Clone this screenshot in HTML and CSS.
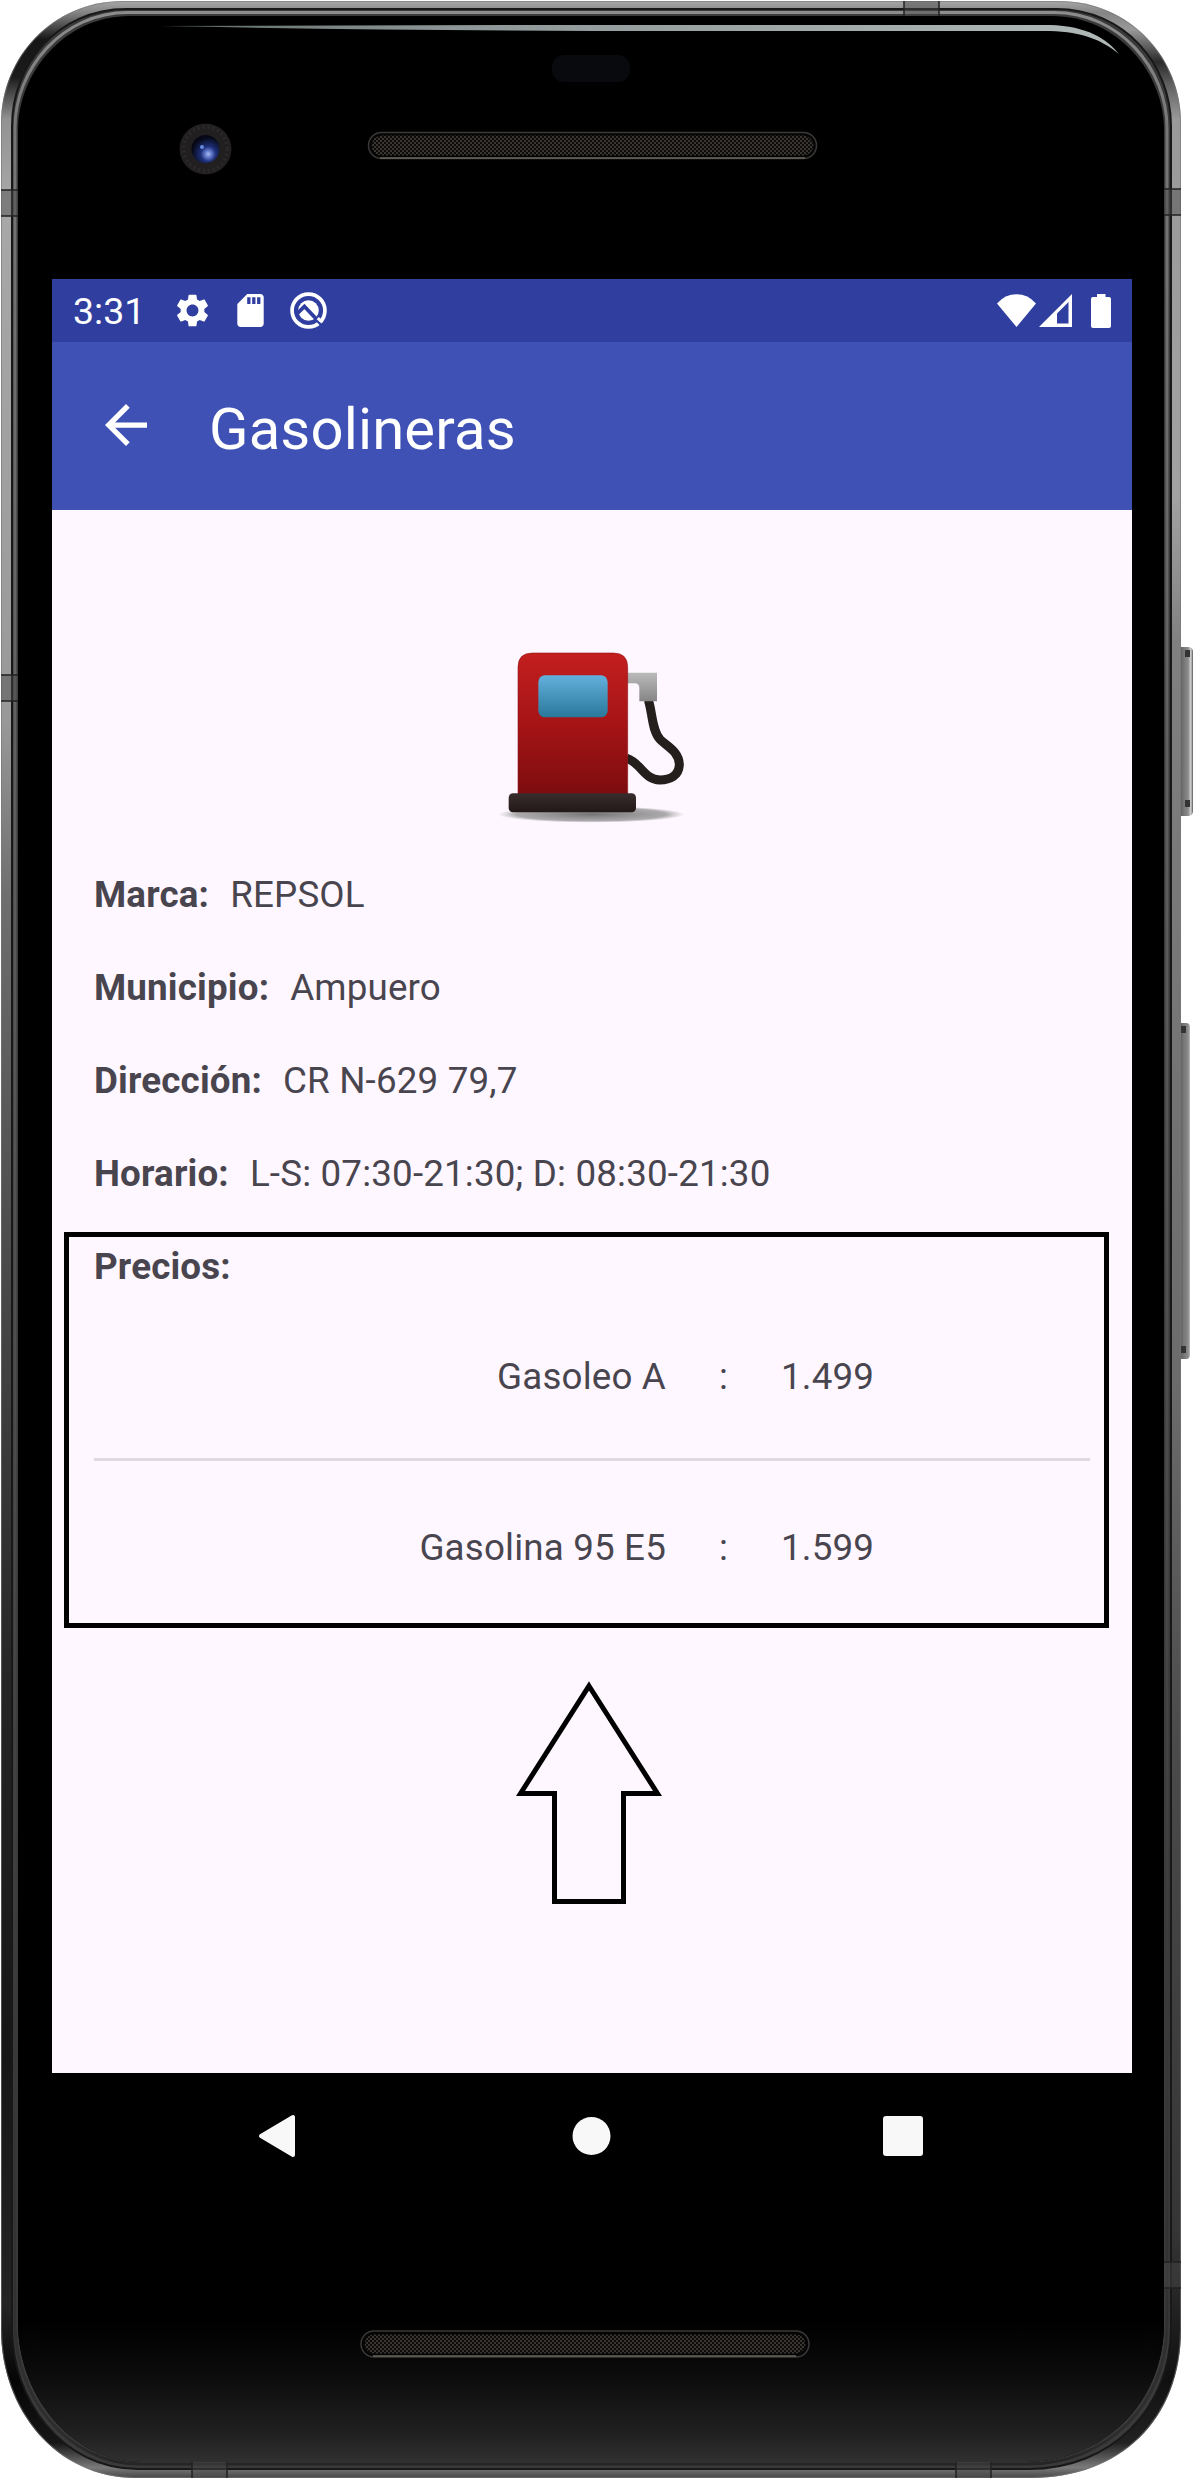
FILE: index.html
```html
<!DOCTYPE html>
<html lang="es">
<head>
<meta charset="utf-8">
<title>Gasolineras</title>
<link rel="stylesheet" href="styles.css">
</head>
<body>
<div class="phone">
  <svg class="chassis" viewBox="0 0 1194 2480" aria-hidden="true">
    <defs>
      <clipPath id="body"><path d="M123 1H1059C1130 1 1181 58 1181 123V2329C1181 2420 1120 2478 1031 2478H136C56 2478 1 2410 1 2329V123C1 58 52 1 123 1Z"/></clipPath>
      <linearGradient id="left" gradientUnits="userSpaceOnUse" x1="0" y1="0" x2="0" y2="2480">
        <stop offset="0" stop-color="#aaa"/><stop offset=".005" stop-color="#858585"/><stop offset=".016" stop-color="#161616"/><stop offset=".031" stop-color="#1b1b1b"/><stop offset=".048" stop-color="#929292"/><stop offset=".08" stop-color="#a8a8a8"/><stop offset=".29" stop-color="#999"/><stop offset=".36" stop-color="#6f6f6f"/><stop offset=".52" stop-color="#484848"/><stop offset=".68" stop-color="#252525"/><stop offset=".83" stop-color="#161616"/><stop offset=".93" stop-color="#242424"/><stop offset=".96" stop-color="#050505"/><stop offset=".985" stop-color="#161616"/><stop offset=".995" stop-color="#7a7a7a"/><stop offset="1" stop-color="#3c3c3c"/>
      </linearGradient>
      <linearGradient id="right" gradientUnits="userSpaceOnUse" x1="0" y1="0" x2="0" y2="2480">
        <stop offset="0" stop-color="#aaa"/><stop offset=".005" stop-color="#858585"/><stop offset=".012" stop-color="#999"/><stop offset=".025" stop-color="#2a2a2a"/><stop offset=".034" stop-color="#606060"/><stop offset=".048" stop-color="#999"/><stop offset=".2" stop-color="#a2a2a2"/><stop offset=".26" stop-color="#808080"/><stop offset=".56" stop-color="#6b6b6b"/><stop offset=".7" stop-color="#4b4b4b"/><stop offset=".9" stop-color="#353535"/><stop offset=".96" stop-color="#101010"/><stop offset=".985" stop-color="#222"/><stop offset=".995" stop-color="#7a7a7a"/><stop offset="1" stop-color="#3c3c3c"/>
      </linearGradient>
      <linearGradient id="edge" gradientUnits="userSpaceOnUse" x1="0" y1="0" x2="0" y2="2480">
        <stop offset="0" stop-color="#8f8f8f"/><stop offset=".05" stop-color="#777"/><stop offset=".3" stop-color="#606060"/><stop offset=".6" stop-color="#4a4a4a"/><stop offset=".98" stop-color="#2d2d2d"/><stop offset="1" stop-color="#222"/>
      </linearGradient>
      <linearGradient id="chin" x1="0" y1="0" x2="0" y2="1">
        <stop offset="0" stop-color="#000"/><stop offset=".35" stop-color="#0a0a0a"/><stop offset=".8" stop-color="#202020"/><stop offset="1" stop-color="#303030"/>
      </linearGradient>
      <linearGradient id="glow"><stop offset="0" stop-color="#1e1e1e" stop-opacity="0"/><stop offset=".5" stop-color="#1e1e1e"/><stop offset="1" stop-color="#1e1e1e" stop-opacity="0"/></linearGradient>
      <linearGradient id="shine"><stop offset="0" stop-color="#5d6b68"/><stop offset=".3" stop-color="#8d9696"/><stop offset="1" stop-color="#b0b8b8"/></linearGradient>
      <linearGradient id="key"><stop offset="0" stop-color="#555"/><stop offset=".35" stop-color="#777"/><stop offset=".65" stop-color="#8a8a8a"/><stop offset=".85" stop-color="#d2d5d2"/><stop offset="1" stop-color="#555"/></linearGradient>
      <radialGradient id="lens" cx=".6" cy=".68" r=".6"><stop offset="0" stop-color="#a9bbf2"/><stop offset=".2" stop-color="#6379cb"/><stop offset=".45" stop-color="#1d2f78"/><stop offset="1" stop-color="#060815"/></radialGradient>
      <pattern id="mesh" width="4" height="4" patternUnits="userSpaceOnUse"><rect width="4" height="4" fill="#0c0b0a"/><path d="M0 0h2v2h-2zM2 2h2v2h-2z" fill="#393531"/></pattern>
    </defs>
    <path d="M1179 647h9q5 0 5 5v159q0 5-5 5h-9zM1179 1023h7q4 0 4 4v328q0 4-4 4h-7z" fill="url(#key)"/>
    <path d="M1185 650h5v7h-5zM1185 800h5v7h-5zM1181 1026h5v7h-5zM1181 1346h5v7h-5z" fill="#333"/>
    <g clip-path="url(#body)">
      <path d="M0 0h594v2480H0z" fill="url(#left)"/>
      <path d="M594 0h600v2480H594z" fill="url(#right)"/>
      <path d="M123 1H1059C1130 1 1181 58 1181 123V2329C1181 2420 1120 2478 1031 2478H136C56 2478 1 2410 1 2329V123C1 58 52 1 123 1Z" fill="none" stroke="#777" stroke-opacity=".6" stroke-width="2"/>
      <path d="M126 9H1056C1125 9 1171 65 1171 126V2327C1171 2410 1110 2469 1029 2469H138C62 2469 12 2400 12 2327V126C12 65 58 9 126 9Z" fill="#3a3a3a" stroke="#181818" stroke-width="2"/>
      <path d="M128 12.500H1054C1120 12.500 1167 69 1167 128V2325C1167 2405 1106 2464 1027 2464H140C66 2464 15 2395 15 2325V128C15 69 62 12.500 128 12.500Z" fill="none" stroke="url(#edge)" stroke-width="3"/>
      <g fill="#4a4a4a" fill-opacity=".45" stroke="#222" stroke-width="1.500">
        <path d="M904-2h35v20h-35zM-2 190h22v26H-2zM-2 675h22v26H-2zM1163 189h20v26h-20zM1163 2262h20v26h-20zM192 2460h35v22h-35zM956 2460h35v22h-35z"/>
      </g>
    </g>
    <path d="M130 16H1052C1118 16 1164 73 1164 130V2323C1164 2403 1103 2462 1025 2462H142C69 2462 18 2393 18 2323V130C18 73 64 16 130 16Z" fill="#000"/>
    <path d="M18 2320H1164V2323C1164 2403 1103 2462 1025 2462H142C69 2462 18 2393 18 2323Z" fill="url(#chin)"/>
    <path d="M22 110h17v2250H22zM1145 70h16v2280h-16z" fill="url(#glow)"/>
    <path d="M159 26L520 25H1050C1087 26 1107 39 1119 54C1102 40 1083 32 1050 31H594Q370 30 159 26Z" fill="url(#shine)"/>
    <rect x="552" y="55" width="78" height="27" rx="12" fill="#080a0e"/>
    <ellipse cx="205.500" cy="149" rx="26" ry="25.500" fill="#211f20"/>
    <circle cx="205.500" cy="149" r="22" fill="none" stroke="#2c292a" stroke-width="4" stroke-dasharray="2 3"/>
    <circle cx="205.500" cy="149" r="14" fill="url(#lens)"/>
    <circle cx="202" cy="147" r="2" fill="#6688dd"/>
    <g fill="url(#mesh)" stroke="#050505" stroke-width="3">
      <rect x="370" y="134" width="445" height="23" rx="11.500"/>
      <rect x="363" y="2333" width="444" height="22" rx="11"/>
    </g>
    <g fill="none" stroke="#3b3937" stroke-width="1.500">
      <rect x="368.500" y="132.500" width="448" height="26" rx="13"/>
      <rect x="361" y="2331" width="448" height="26" rx="13"/>
    </g>
    <path d="M380 158H805M373 2356H796" stroke="#6a655e" stroke-width="1.500"/>
  </svg>

  <main class="screen">
    <div class="status">
      <span class="time">3:31</span>
      <svg class="gear" viewBox="2 2 20 20"><path fill="#fff" d="M19.140 12.940c.040-.300.060-.610.060-.940 0-.320-.020-.640-.070-.940l2.030-1.580c.180-.140.230-.410.120-.610l-1.920-3.320c-.120-.220-.370-.290-.590-.220l-2.390.960c-.500-.380-1.030-.700-1.620-.940l-.360-2.540c-.040-.240-.240-.410-.480-.410h-3.840c-.240 0-.430.170-.470.410l-.360 2.540c-.590.240-1.130.570-1.620.940l-2.390-.960c-.220-.080-.470 0-.590.220L2.740 8.870c-.120.210-.080.470.120.610l2.030 1.580c-.050.300-.090.630-.090.940s.020.640.070.940l-2.030 1.580c-.180.140-.230.410-.120.610l1.920 3.320c.120.220.370.290.590.220l2.390-.960c.500.380 1.030.700 1.620.940l.360 2.540c.050.240.240.410.480.410h3.840c.240 0 .440-.170.470-.410l.360-2.540c.590-.240 1.130-.560 1.620-.940l2.390.960c.220.080.470 0 .590-.220l1.920-3.320c.120-.220.070-.470-.120-.610l-2.010-1.580zM12 15.600c-1.980 0-3.600-1.620-3.600-3.600s1.620-3.600 3.600-3.600 3.600 1.620 3.600 3.600-1.620 3.600-3.600 3.600z"/></svg>
      <svg class="card" viewBox="4 2 16 20"><path fill="#fff" d="M18 2h-8L4.020 8 4 20c0 1.100.900 2 2 2h12c1.100 0 2-.900 2-2V4c0-1.100-.900-2-2-2zm-6 6h-2V4h2v4zm3 0h-2V4h2v4zm3 0h-2V4h2v4z"/></svg>
      <svg class="badge" viewBox="0 0 36 36"><circle cx="18" cy="18" r="16" fill="none" stroke="#fff" stroke-width="3.600"/><circle cx="18" cy="18" r="10" fill="#fff"/><path d="M7 21L14 14L33 34" fill="none" stroke="#303f9f" stroke-width="3.600"/><path d="M27 25.500l4.500 4" stroke="#fff" stroke-width="3"/></svg>
      <span class="spacer"></span>
      <svg class="wifi" viewBox="0 0 39 33"><path fill="#fff" d="M0 9.500Q8 .3 19.500.3T39 9.500L19.500 33Z"/></svg>
      <svg class="signal" viewBox="0 0 33 33"><path fill="#fff" fill-rule="evenodd" d="M33 0V33H0ZM29.500 8L18 19.500V29.500H29.500Z"/></svg>
      <svg class="battery" viewBox="0 0 20 34"><path fill="#fff" d="M6 0h8.500v3H18q2 0 2 2v27q0 2-2 2H2q-2 0-2-2V5q0-2 2-2h4z"/></svg>
    </div>
    <header class="appbar">
      <svg class="back" viewBox="4 4 16 16"><path fill="#fff" d="M20 11H7.830l5.590-5.590L12 4l-8 8 8 8 1.410-1.410L7.830 13H20v-2z"/></svg>
      <h1>Gasolineras</h1>
    </header>
    <section class="content">
      <svg class="pump" viewBox="0 0 690 630">
        <defs>
          <linearGradient id="red" x1="0" y1="0" x2="0" y2="1"><stop offset="0" stop-color="#c31f1f"/><stop offset=".5" stop-color="#a51416"/><stop offset="1" stop-color="#7b0c0e"/></linearGradient>
          <linearGradient id="blue" x1="0" y1="0" x2="0" y2="1"><stop offset="0" stop-color="#63b0dd"/><stop offset="1" stop-color="#29789b"/></linearGradient>
          <linearGradient id="grey" x1="0" y1="0" x2="0" y2="1"><stop offset="0" stop-color="#bbb"/><stop offset="1" stop-color="#858585"/></linearGradient>
          <linearGradient id="base" x1="0" y1="0" x2="0" y2="1"><stop offset="0" stop-color="#382d2c"/><stop offset="1" stop-color="#221817"/></linearGradient>
          <radialGradient id="shade"><stop offset="0" stop-color="#666" stop-opacity=".9"/><stop offset=".8" stop-color="#888" stop-opacity=".7"/><stop offset="1" stop-color="#999" stop-opacity="0"/></radialGradient>
        </defs>
        <ellipse cx="334" cy="553" rx="280" ry="25" fill="url(#shade)"/>
        <path d="M505 210C518 250 515 300 540 328C562 350 598 365 598 405C596 438 570 450 540 450C490 448 485 400 440 385" fill="none" stroke="#241e1c" stroke-width="27"/>
        <path d="M440 128H531V214H478V174Q478 160 464 160H440Z" fill="url(#grey)"/>
        <path d="M114 500V112Q114 69 157 69H400Q443 69 443 112V500Z" fill="url(#red)" stroke="#8e1517" stroke-opacity=".6" stroke-width="3"/>
        <rect x="175" y="136" width="208" height="126" rx="20" fill="url(#blue)"/>
        <rect x="86" y="490" width="382" height="57" rx="13" fill="url(#base)"/>
      </svg>
      <p class="field"><b>Marca:</b><span>REPSOL</span></p>
      <p class="field"><b>Municipio:</b><span>Ampuero</span></p>
      <p class="field"><b>Dirección:</b><span>CR N-629 79,7</span></p>
      <p class="field"><b>Horario:</b><span>L-S: 07:30-21:30; D: 08:30-21:30</span></p>
      <p class="field"><b>Precios:</b></p>
      <div class="price price-first"><span>Gasoleo A</span><i>:</i><span>1.499</span></div>
      <div class="price"><span>Gasolina 95 E5</span><i>:</i><span>1.599</span></div>
    </section>
    <div class="highlight"></div>
    <svg class="arrow" viewBox="0 0 146 228"><path d="M73 5L141.500 112.500H107.500V220.500H38.500V112.500H4.500Z" fill="none" stroke="#000" stroke-width="5"/></svg>
  </main>

  <nav class="navbar">
    <svg viewBox="0 0 42 44"><path d="M36 3V41L4 22Z" fill="#f8f8f8" stroke="#f8f8f8" stroke-width="4" stroke-linejoin="round"/></svg>
    <svg viewBox="0 0 42 44"><circle cx="21.500" cy="22" r="19" fill="#f8f8f8"/></svg>
    <svg viewBox="0 0 42 44"><rect x="1" y="2" width="40" height="40" rx="3" fill="#f8f8f8"/></svg>
  </nav>
</div>
</body>
</html>
```
FILE: styles.css
```css
* { box-sizing: border-box; }

body {
  margin: 0;
  background: #fff;
  font-family: Roboto, "Noto Sans", sans-serif;
}

svg { display: block; flex: none; }

.phone {
  position: relative;
  width: 1194px;
  height: 2480px;
  padding: 279px 62px 0 52px;
}

.chassis {
  position: absolute;
  inset: 0;
  width: 1194px;
  height: 2480px;
}

.screen {
  position: relative;
  height: 1794px;
  background: #fef7ff;
}

.status {
  display: flex;
  align-items: center;
  height: 63px;
  padding: 0 21px;
  background: #303f9f;
  color: #fff;
}

.time {
  width: 102.500px;
  font-size: 37.500px;
  line-height: 63px;
  padding-top: 2px;
}

.gear { width: 33px; height: 33px; }
.card { width: 27px; height: 33px; margin-left: 28px; }
.badge { width: 37px; height: 37px; margin-left: 26px; }
.spacer { flex: 1; }
.wifi { width: 39px; height: 33px; margin-right: 3px; }
.signal { width: 33px; height: 33px; margin-right: 19px; }
.battery { width: 20px; height: 34px; }

.appbar {
  display: flex;
  align-items: center;
  height: 168px;
  padding: 0 0 2px 53px;
  background: #3f51b5;
  color: #fff;
}

.back { width: 42px; height: 42px; }

h1 {
  margin: 7px 0 0 62px;
  font-size: 58px;
  font-weight: 400;
  letter-spacing: .15px;
  line-height: 72px;
}

.content {
  padding: 120px 42px 0;
  color: #49454f;
  font-size: 36.750px;
  letter-spacing: .17px;
}

.pump {
  width: 230px;
  height: 210px;
  margin: 0 0 8px 386px;
}

.field {
  display: flex;
  align-items: center;
  gap: 21px;
  height: 93px;
  margin: 0;
}

.field b { font-weight: 700; }

.price {
  display: grid;
  grid-template-columns: 572px 115px 1fr;
  align-items: center;
  height: 173px;
}

.price span:first-child { text-align: right; }
.price i { font-style: normal; text-align: center; }

.price-first {
  height: 148px;
  padding-bottom: 19px;
  border-bottom: 3px solid #dfd9e1;
}

.highlight {
  position: absolute;
  left: 12px;
  top: 953px;
  width: 1045px;
  height: 396px;
  border: 5px solid #000;
}

.arrow {
  position: absolute;
  left: 464px;
  top: 1402px;
  width: 146px;
  height: 228px;
}

.navbar {
  position: relative;
  display: flex;
  justify-content: space-between;
  height: 126px;
  padding: 41px 208px 0 205px;
}

.navbar svg { width: 42px; height: 44px; }
```
